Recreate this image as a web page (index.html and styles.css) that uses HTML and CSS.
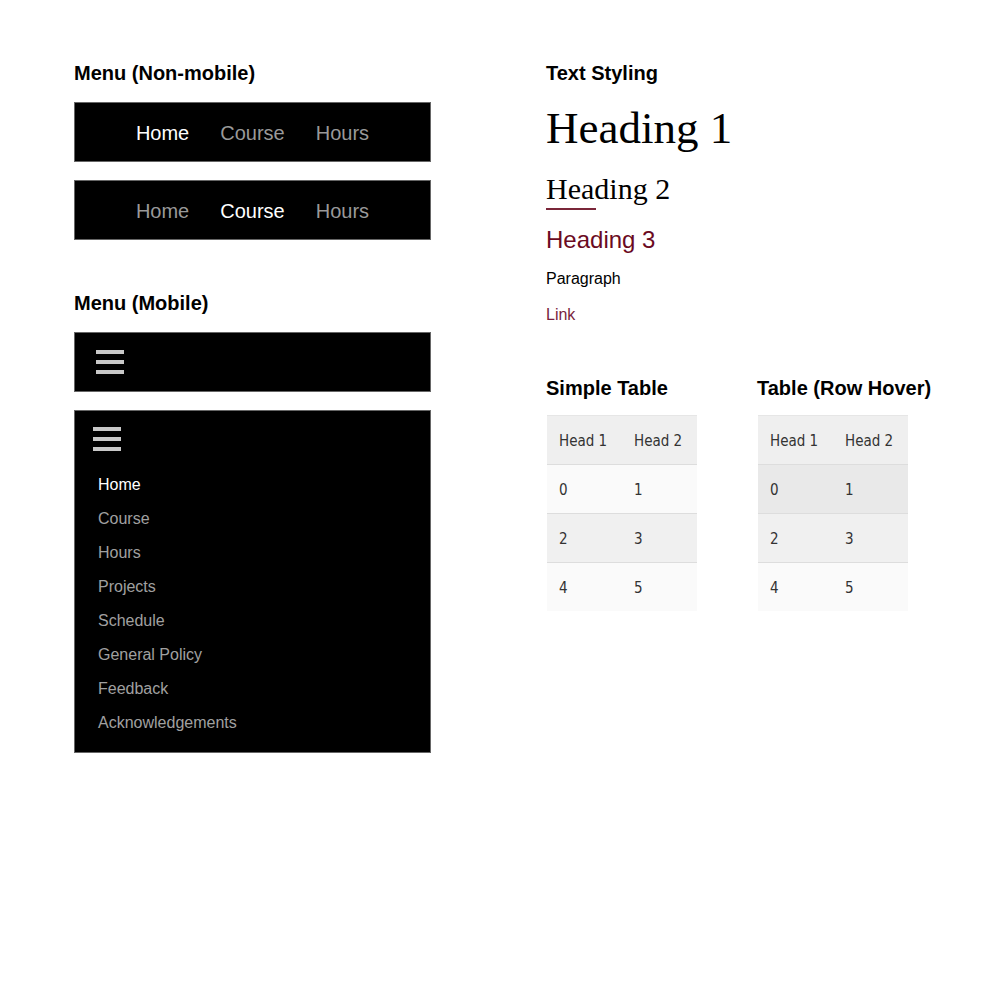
FILE: index.html
```html
<!DOCTYPE html>
<html lang="en">
<head>
    <meta charset="UTF-8">
    <meta name="viewport" content="width=device-width, initial-scale=1.0">
    <title>Style Guide</title>
    <link rel="stylesheet" href="styles.css">
</head>
<body>
    <div class="page">
        <div class="col-left">
            <h3 class="section-title">Menu (Non-mobile)</h3>
            <nav class="menu">
                <a class="active" href="#">Home</a>
                <a href="#">Course</a>
                <a href="#">Hours</a>
            </nav>
            <nav class="menu">
                <a href="#">Home</a>
                <a class="active" href="#">Course</a>
                <a href="#">Hours</a>
            </nav>

            <h3 class="section-title mobile-title">Menu (Mobile)</h3>
            <div class="menu-mobile">
                <div class="burger"><span></span><span></span><span></span></div>
            </div>
            <div class="menu-mobile open">
                <div class="burger"><span></span><span></span><span></span></div>
                <ul class="mobile-list">
                    <li><a class="active" href="#">Home</a></li>
                    <li><a href="#">Course</a></li>
                    <li><a href="#">Hours</a></li>
                    <li><a href="#">Projects</a></li>
                    <li><a href="#">Schedule</a></li>
                    <li><a href="#">General Policy</a></li>
                    <li><a href="#">Feedback</a></li>
                    <li><a href="#">Acknowledgements</a></li>
                </ul>
            </div>
        </div>

        <div class="col-right">
            <h3 class="section-title">Text Styling</h3>
            <h1>Heading 1</h1>
            <h2>Heading 2</h2>
            <h3 class="heading3">Heading 3</h3>
            <p class="para">Paragraph</p>
            <a class="link" href="#">Link</a>

            <div class="tables">
                <div>
                    <h3 class="section-title table-title">Simple Table</h3>
                    <table class="tbl">
                        <tr><th>Head 1</th><th>Head 2</th></tr>
                        <tr><td>0</td><td>1</td></tr>
                        <tr><td>2</td><td>3</td></tr>
                        <tr><td>4</td><td>5</td></tr>
                    </table>
                </div>
                <div class="table-hover">
                    <h3 class="section-title table-title">Table (Row Hover)</h3>
                    <table class="tbl hover">
                        <tr><th>Head 1</th><th>Head 2</th></tr>
                        <tr class="hovered"><td>0</td><td>1</td></tr>
                        <tr><td>2</td><td>3</td></tr>
                        <tr><td>4</td><td>5</td></tr>
                    </table>
                </div>
            </div>
        </div>
    </div>
</body>
</html>
```

FILE: styles.css
```css
body {
    margin: 0;
    font-family: "Liberation Sans", Arial, sans-serif;
    color: #000;
    background: #fff;
}
.page {
    display: flex;
    gap: 115px;
    padding: 62px 0 0 74px;
}
.col-left {
    width: 357px;
    flex-shrink: 0;
}
.section-title {
    margin: 0 0 18px;
    font-size: 20px;
    line-height: 22px;
    font-weight: bold;
}
.mobile-title {
    margin-top: 52px;
}

/* desktop menu */
.menu {
    display: flex;
    justify-content: center;
    gap: 31px;
    height: 56px;
    padding-top: 2px;
    align-items: center;
    background: #000;
    border: 1px solid #666;
    margin-bottom: 18px;
}
.menu a {
    color: #999;
    font-size: 20px;
    text-decoration: none;
}
.menu a.active {
    color: #fff;
}

/* mobile menu */
.menu-mobile {
    background: #000;
    border: 1px solid #666;
    height: 58px;
    padding-left: 21px;
    display: flex;
    align-items: center;
    margin-bottom: 18px;
}
.burger span {
    display: block;
    width: 28px;
    height: 4px;
    background: #c8c8c8;
    margin-bottom: 6px;
}
.burger span:last-child {
    margin-bottom: 0;
}
.menu-mobile.open {
    display: block;
    height: auto;
    padding: 16px 0 12px 18px;
}
.mobile-list {
    list-style: none;
    margin: 17px 0 0;
    padding: 0 0 0 5px;
}
.mobile-list li {
    line-height: 34px;
    font-size: 16px;
}
.mobile-list a {
    color: #a0a0a0;
    text-decoration: none;
}
.mobile-list a.active {
    color: #fff;
}

/* text styling */
.col-right {
    width: 430px;
    flex-shrink: 0;
}
h1 {
    margin: 17px 0 0;
    font-family: "Liberation Serif", "Times New Roman", serif;
    font-weight: normal;
    font-size: 45px;
    line-height: 52px;
}
h2 {
    margin: 17px 0 0;
    font-family: "Liberation Serif", "Times New Roman", serif;
    font-weight: normal;
    font-size: 30px;
    line-height: 36px;
}
h2::after {
    content: "";
    display: block;
    width: 50px;
    height: 2px;
    margin-top: 1px;
    background: #7a2639;
}
.heading3 {
    margin: 16px 0 0;
    font-size: 24px;
    line-height: 28px;
    font-weight: normal;
    color: #6b0a22;
}
.para {
    margin: 15px 0 0;
    font-size: 16px;
    line-height: 20px;
}
.link {
    display: block;
    margin-top: 16px;
    font-size: 16px;
    line-height: 20px;
    color: #7a1f3d;
    text-decoration: none;
}

/* tables */
.tables {
    display: flex;
    margin-top: 52px;
}
.tables > div {
    width: 211px;
    flex-shrink: 0;
}
.table-title {
    margin-bottom: 16px;
}
.tbl {
    border-collapse: collapse;
    margin-left: 1px;
    font-family: "DejaVu Sans Condensed", "DejaVu Sans", Tahoma, sans-serif;
    font-size: 15px;
    color: #333;
    border-top: 1px solid #e6e6e6;
}
.tbl th, .tbl td {
    width: 63px;
    height: 46px;
    padding: 2px 0 0 12px;
    text-align: left;
    font-weight: normal;
    border-bottom: 1px solid #ddd;
}
.tbl tr:last-child td {
    border-bottom: none;
}
.tbl th {
    background: #efefef;
}
.tbl tr:nth-child(even) td {
    background: #fafafa;
}
.tbl tr:nth-child(odd) td {
    background: #f0f0f0;
}
.tbl tr.hovered td {
    background: #e9e9e9;
}
.tbl.hover tr:hover td {
    background: #e9e9e9;
}
```
